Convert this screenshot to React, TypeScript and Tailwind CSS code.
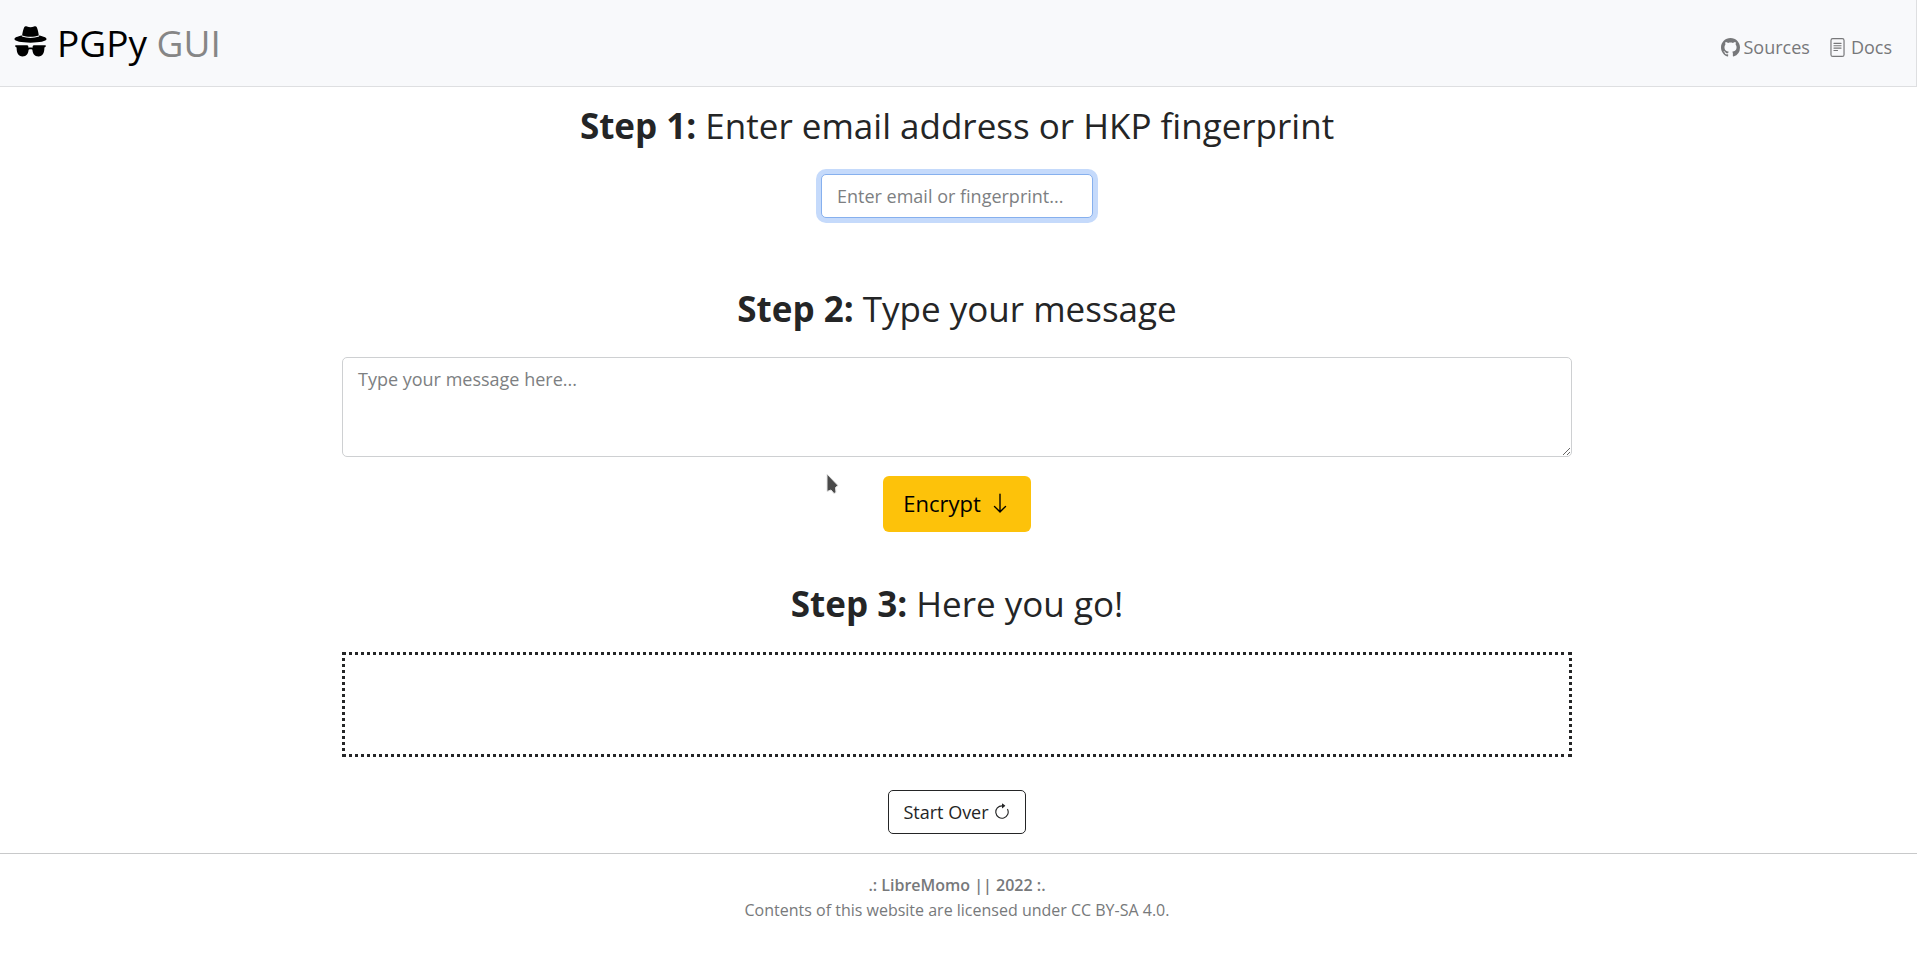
import { BsArrowClockwise, BsArrowDown, BsFileText, BsGithub } from "react-icons/bs";

function StepHeading({ id, step, children }: { id?: string; step: number; children: string }) {
  return (
    <h2 id={id} className="text-center text-[35px] leading-[44px] text-[#242526]">
      <strong className="font-bold">Step {step}:</strong> {children}
    </h2>
  );
}

function IncognitoLogo() {
  return (
    <svg aria-hidden="true" className="h-[31px] w-[33px]" viewBox="0 0 33 31" fill="currentColor">
      <path d="M10.200 1.200C10.800.200 12 .200 13 .600c2.200.9 4.800.9 7 0 1-.4 2.300-.4 2.800.6.900 1.900 1.700 5.300 2 8.300-4.700 1.700-12 1.700-16.700 0 .4-3 1.200-6.400 2.100-8.300z" />
      <path d="M7.900 10.600c5.300 1.900 11.900 1.900 17.200 0l-.1-1.200c4.600.9 7.600 2.200 7.600 3.700 0 2.200-7.200 3.600-16.100 3.600S.4 15.300.4 13.100c0-1.500 3-2.800 7.600-3.700z" />
      <path d="M1.300 19.300h11.900c.7 0 1.200.7 1.300 2.400 1.300-.4 2.700-.4 4 0 .1-1.700.6-2.400 1.300-2.400h11.900v1.500l-1.300.6c0 5.400-1.700 9-5.900 9-4.100 0-5.900-3.200-6.100-6.700-1.100-.5-2.700-.5-3.800 0-.2 3.500-2 6.700-6.100 6.700-4.200 0-5.900-3.600-5.900-9l-1.300-.6z" />
    </svg>
  );
}

function Pointer() {
  return (
    <svg
      aria-hidden="true"
      className="pointer-events-none absolute top-[472px] left-[825px] h-6 w-4"
      viewBox="0 0 16 24"
    >
      <path d="M2 2v17.500l4-1.500 3 3.500 2-1-.5-5 2.500-2z" fill="#4a4a4a" stroke="#e4e4e4" strokeWidth="1" />
    </svg>
  );
}

export default function App() {
  return (
    <div className="relative min-h-screen bg-white font-['Open_Sans','Noto_Sans',sans-serif] text-[#242526]">
      <header className="flex h-[87px] items-center justify-between border-r border-b border-[#dedfe1] bg-[#f8f9fb] pr-6 pl-[14px]">
        <a href="#" className="flex items-center gap-2.5 text-[37px] leading-[44px] text-black">
          <span className="pb-1">
            <IncognitoLogo />
          </span>
          <span>
            PGPy <span className="text-[#868686]">GUI</span>
          </span>
        </a>
        <nav className="flex items-center gap-[18px] pt-2 text-[18px] leading-7 text-[#77787a]">
          <a href="#sources" className="flex items-center gap-1">
            <BsGithub className="size-[19px]" />
            Sources
          </a>
          <a href="#docs" className="flex items-center gap-1">
            <BsFileText className="size-[19px]" />
            Docs
          </a>
        </nav>
      </header>

      <main className="flex flex-col items-center pt-[17px] pr-[3px] pb-[19px]">
        <StepHeading id="step-1" step={1}>Enter email address or HKP fingerprint</StepHeading>
        <input
          type="text"
          aria-labelledby="step-1"
          placeholder="Enter email or fingerprint..."
          className="mt-[26px] h-11 w-[272px] rounded-[5px] border border-[#86b0ee] bg-white px-[15px] text-[18px] leading-7 shadow-[0_0_0_5px_#c5dafb] outline-none placeholder:text-[#7d7f82]"
        />

        <div className="mt-[69px]">
          <StepHeading id="step-2" step={2}>Type your message</StepHeading>
        </div>
        <div className="mt-[26px] flex w-2/3 px-[23px]">
          <textarea
            aria-labelledby="step-2"
            placeholder="Type your message here..."
            className="h-[100px] w-full resize-y rounded-[5px] border border-[#ced0d2] bg-white px-[15px] py-[7px] text-[18px] leading-7 outline-none placeholder:text-[#7d7f82]"
          />
        </div>
        <button
          type="button"
          className="mt-[19px] flex h-14 w-[148px] items-center justify-center gap-2 rounded-md bg-[#fdc20a] pb-0.5 text-[22px] leading-8 text-black"
        >
          Encrypt
          <BsArrowDown className="size-[22px]" />
        </button>

        <div className="mt-[50px]">
          <StepHeading step={3}>Here you go!</StepHeading>
        </div>
        <div className="mt-[26px] w-2/3 px-[23px]">
          <output className="block h-[105px] border-[3px] border-dotted border-[#242526]" />
        </div>
        <button
          type="button"
          className="mt-[33px] flex h-11 w-[138px] items-center justify-center gap-1 rounded-[5px] border border-[#242526] text-[18px] leading-7"
        >
          Start Over
          <BsArrowClockwise className="size-[18px]" />
        </button>
      </main>

      <footer className="border-t border-[#c8c9ca] pt-[19px] pr-[3px] text-center text-[16px] leading-[25px] text-[#77797b]">
        <p className="font-semibold">.: LibreMomo || 2022 :.</p>
        <p>Contents of this website are licensed under CC BY-SA 4.0.</p>
      </footer>
      <Pointer />
    </div>
  );
}
